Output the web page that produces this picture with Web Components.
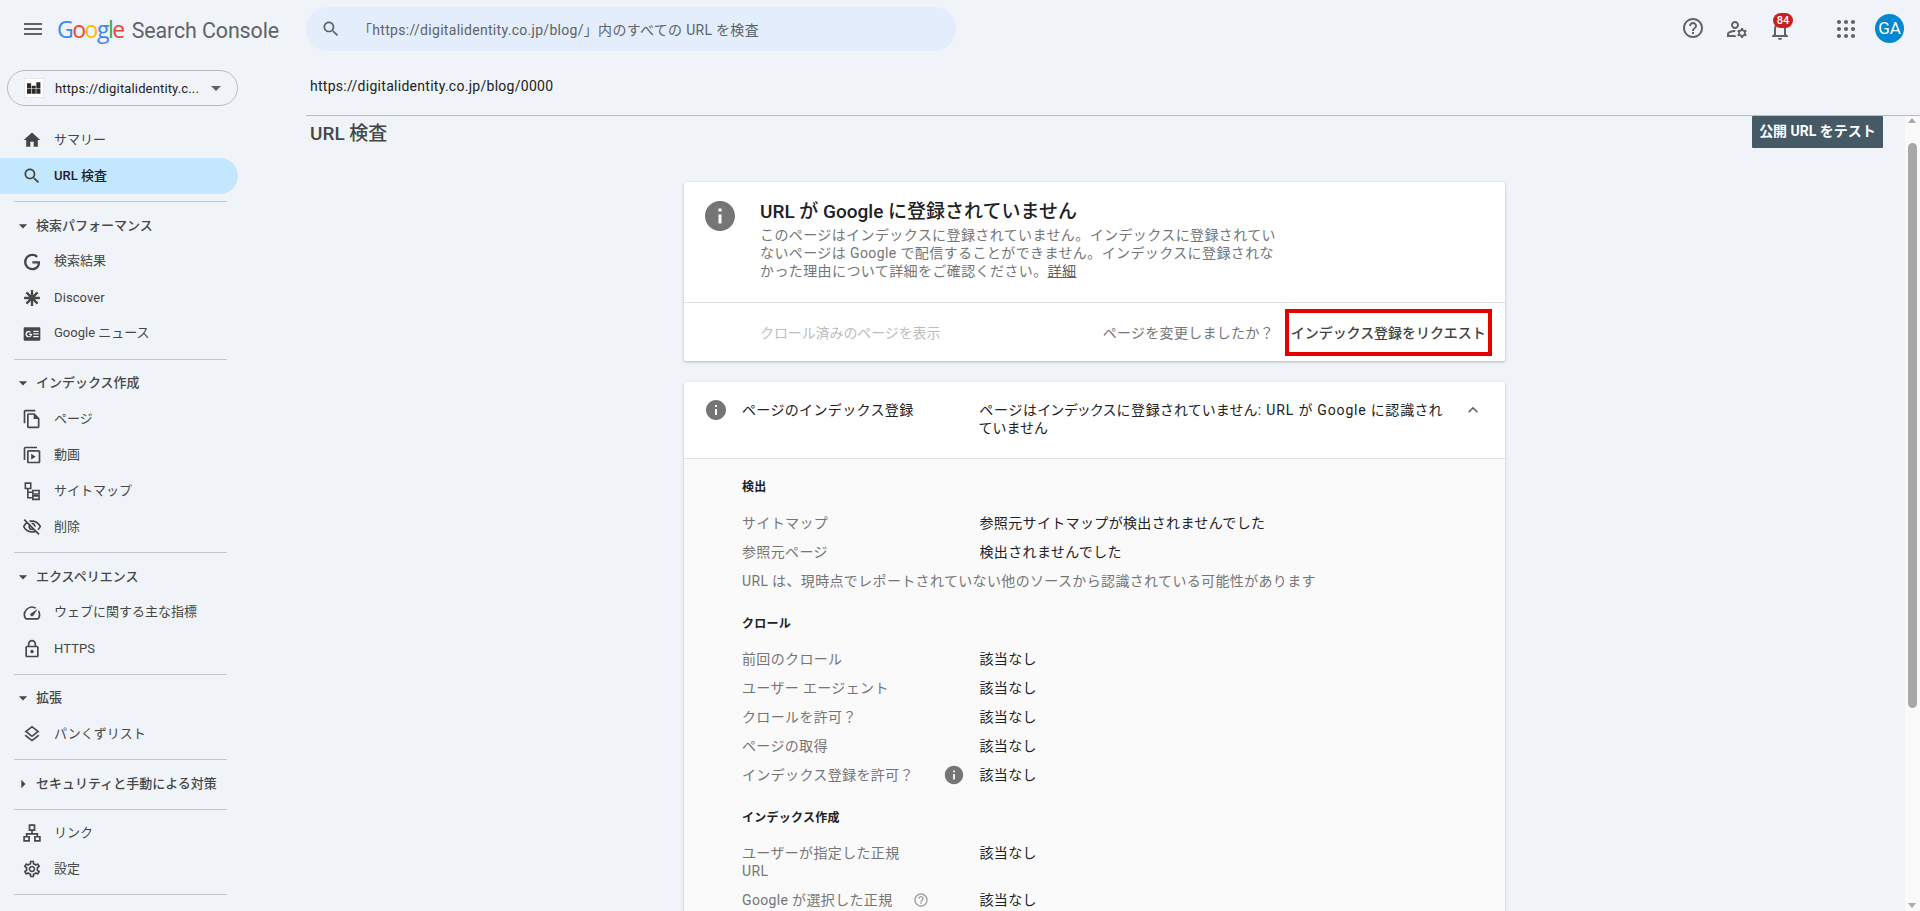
<!DOCTYPE html>
<html lang="ja"><head><meta charset="utf-8"><title>Search Console</title>
<style>
html,body{margin:0;height:100%;overflow:hidden;background:#f0f4f9;font-family:Roboto,"Noto Sans CJK JP",sans-serif;color:#3c4043}
</style></head><body>
<gsc-app>
  <gsc-header slot="header"></gsc-header>
  <gsc-sidebar slot="side">
    <gsc-property>https://digitalidentity.c...</gsc-property>
    <gsc-group first>
      <gsc-nav icon="home">サマリー</gsc-nav>
      <gsc-nav icon="search" active>URL 検査</gsc-nav>
    </gsc-group>
    <gsc-group>
      <gsc-sec>検索パフォーマンス</gsc-sec>
      <gsc-nav icon="g">検索結果</gsc-nav>
      <gsc-nav icon="discover" latin>Discover</gsc-nav>
      <gsc-nav icon="news">Google ニュース</gsc-nav>
    </gsc-group>
    <gsc-group>
      <gsc-sec>インデックス作成</gsc-sec>
      <gsc-nav icon="pages">ページ</gsc-nav>
      <gsc-nav icon="video">動画</gsc-nav>
      <gsc-nav icon="sitemap">サイトマップ</gsc-nav>
      <gsc-nav icon="eyeoff">削除</gsc-nav>
    </gsc-group>
    <gsc-group>
      <gsc-sec>エクスペリエンス</gsc-sec>
      <gsc-nav icon="speed">ウェブに関する主な指標</gsc-nav>
      <gsc-nav icon="lock" latin>HTTPS</gsc-nav>
    </gsc-group>
    <gsc-group>
      <gsc-sec>拡張</gsc-sec>
      <gsc-nav icon="layers">パンくずリスト</gsc-nav>
    </gsc-group>
    <gsc-group>
      <gsc-sec closed>セキュリティと手動による対策</gsc-sec>
    </gsc-group>
    <gsc-group>
      <gsc-nav icon="links">リンク</gsc-nav>
      <gsc-nav icon="settings">設定</gsc-nav>
    </gsc-group>
  </gsc-sidebar>
  <gsc-main slot="main">
    <gsc-status></gsc-status>
    <gsc-details>
      <gsc-h first>検出</gsc-h>
      <gsc-row label="サイトマップ">参照元サイトマップが検出されませんでした</gsc-row>
      <gsc-row label="参照元ページ">検出されませんでした</gsc-row>
      <gsc-note>URL は、現時点でレポートされていない他のソースから認識されている可能性があります</gsc-note>
      <gsc-h>クロール</gsc-h>
      <gsc-row label="前回のクロール">該当なし</gsc-row>
      <gsc-row label="ユーザー エージェント">該当なし</gsc-row>
      <gsc-row label="クロールを許可？">該当なし</gsc-row>
      <gsc-row label="ページの取得">該当なし</gsc-row>
      <gsc-row label="インデックス登録を許可？" hint="info">該当なし</gsc-row>
      <gsc-h>インデックス作成</gsc-h>
      <gsc-row label="ユーザーが指定した正規 URL">該当なし</gsc-row>
      <gsc-row label="Google が選択した正規" hint="help">該当なし</gsc-row>
    </gsc-details>
  </gsc-main>
</gsc-app>
<script>
const P={
menu:'<path d="M3 18h18v-2H3v2zm0-5h18v-2H3v2zm0-7v2h18V6H3z"/>',
search:'<path d="M15.5 14h-.79l-.28-.27C15.41 12.59 16 11.11 16 9.5 16 5.91 13.09 3 9.5 3S3 5.91 3 9.5 5.91 16 9.5 16c1.61 0 3.09-.59 4.23-1.57l.27.28v.79l5 4.99L20.49 19l-4.99-5zm-6 0C7.01 14 5 11.99 5 9.5S7.01 5 9.5 5 14 7.01 14 9.5 11.99 14 9.5 14z"/>',
home:'<path d="M10 20v-6h4v6h5v-8h3L12 3 2 12h3v8z"/>',
g:'<path transform="translate(2.2 2.2) scale(.82)" d="M12.48 10.92v3.28h7.84c-.24 1.84-.853 3.187-1.787 4.133-1.147 1.147-2.933 2.4-6.053 2.4-4.827 0-8.6-3.893-8.6-8.72s3.773-8.72 8.6-8.72c2.6 0 4.507 1.027 5.907 2.347l2.307-2.307C18.747 1.44 16.133 0 12.48 0 5.867 0 .307 5.387.307 12s5.56 12 12.173 12c3.573 0 6.267-1.173 8.373-3.36 2.16-2.16 2.84-5.213 2.84-7.667 0-.76-.053-1.467-.173-2.053H12.48z"/>',
discover:'<path d="M12 2.5v19M2.5 12h19M5.3 5.3l13.4 13.4M18.7 5.3L5.3 18.7" fill="none" stroke="currentColor" stroke-width="2.8"/>',
news:'<path fill-rule="evenodd" d="M3 4h18a1 1 0 0 1 1 1v14a1 1 0 0 1-1 1H3a1 1 0 0 1-1-1V5a1 1 0 0 1 1-1zm10.500 4v1.500H20V8zm0 3.200v1.500H20v-1.500zm0 3.300V16H20v-1.500zM8.200 8a4 4 0 1 0 3.800 5.200c.1-.4.200-1 .1-1.600H8.300v1.500h2.100a2.300 2.300 0 1 1-.7-2.500l1.100-1.100A4 4 0 0 0 8.200 8z"/>',
pages:'<path d="M16 1H4c-1.100 0-2 .9-2 2v14h2V3h12V1zm-1 4H8c-1.100 0-1.990.9-1.990 2L6 21c0 1.100.89 2 1.990 2H19c1.100 0 2-.9 2-2V11l-6-6zM8 21V7h6v5h5v9H8z"/>',
video:'<path fill-rule="evenodd" d="M4 2h14v2H4v14H2V4c0-1.100.9-2 2-2zm4 4h12c1.100 0 2 .9 2 2v12c0 1.100-.9 2-2 2H8c-1.100 0-2-.9-2-2V8c0-1.100.9-2 2-2zm0 2v12h12V8H8zm3 2.500v7l5.500-3.500z"/>',
sitemap:'<path fill="none" stroke="currentColor" stroke-width="1.900" d="M4 2.500h6.500v6.500H4zM13 11.300h7.500v4.200H13zM13 17.800h7.500v4.200H13zM7 9v11h6M7 13.400h6"/>',
eyeoff:'<path d="M12 6c3.790 0 7.170 2.130 8.820 5.500-.59 1.220-1.420 2.270-2.410 3.120l1.410 1.410c1.390-1.230 2.490-2.770 3.180-4.530C21.270 7.110 17 4 12 4c-1.270 0-2.490.2-3.640.57l1.650 1.650C10.660 6.090 11.320 6 12 6zm-1.070 1.140L13 9.210c.57.25 1.030.71 1.280 1.280l2.070 2.070c.08-.34.14-.7.14-1.070C16.500 9.010 14.480 7 12 7c-.37 0-.72.05-1.070.14zM2.010 3.870l2.680 2.680C3.060 7.830 1.770 9.530 1 11.500 2.730 15.890 7 19 12 19c1.520 0 2.980-.29 4.320-.82l3.420 3.420 1.410-1.410L3.420 2.450 2.010 3.870zm7.500 7.500l2.610 2.610c-.04.01-.08.02-.12.02-1.380 0-2.500-1.120-2.500-2.500 0-.05.01-.08.01-.13zm-3.400-3.400l1.750 1.750c-.23.55-.36 1.150-.36 1.780 0 2.480 2.020 4.500 4.500 4.500.63 0 1.230-.13 1.770-.36l.98.98c-.88.24-1.800.38-2.750.38-3.790 0-7.170-2.130-8.820-5.500.7-1.430 1.720-2.610 2.930-3.530z"/>',
speed:'<path d="M20.380 8.570l-1.230 1.850a8 8 0 0 1-.22 7.580H5.070A8 8 0 0 1 15.580 6.850l1.850-1.230A10 10 0 0 0 3.350 19a2 2 0 0 0 1.720 1h13.850a2 2 0 0 0 1.740-1 10 10 0 0 0-.27-10.440zm-9.790 6.840a2 2 0 0 0 2.830 0l5.660-8.490-8.490 5.660a2 2 0 0 0 0 2.830z"/>',
lock:'<path d="M18 8h-1V6c0-2.760-2.240-5-5-5S7 3.240 7 6v2H6c-1.100 0-2 .9-2 2v10c0 1.100.9 2 2 2h12c1.100 0 2-.9 2-2V10c0-1.100-.9-2-2-2zM9 6c0-1.660 1.340-3 3-3s3 1.340 3 3v2H9V6zm9 14H6V10h12v10zm-6-3c1.100 0 2-.9 2-2s-.9-2-2-2-2 .9-2 2 .9 2 2 2z"/>',
layers:'<path d="M11.990 18.540l-7.370-5.730L3 14.070l9 7 9-7-1.630-1.270-7.380 5.740zM12 16l7.360-5.730L21 9l-9-7-9 7 1.630 1.270L12 16zm0-11.470L17.740 9 12 13.470 6.260 9 12 4.530z"/>',
links:'<path fill="none" stroke="currentColor" stroke-width="2" d="M9 2.500h6v6H9zM2.500 16.500h6v5h-6zM15.500 16.500h6v5h-6zM12 8.500V13M5.500 16.500V13h13v3.500"/>',
settings:'<path d="M19.430 12.980c.04-.32.07-.64.07-.98 0-.34-.03-.66-.07-.98l2.110-1.650c.19-.15.24-.42.12-.64l-2-3.460c-.09-.16-.26-.25-.44-.25-.06 0-.12.01-.17.03l-2.490 1c-.52-.4-1.080-.73-1.690-.98l-.38-2.650C14.460 2.180 14.250 2 14 2h-4c-.25 0-.46.18-.49.42l-.38 2.650c-.61.25-1.170.59-1.690.98l-2.490-1c-.06-.02-.12-.03-.18-.03-.17 0-.34.09-.43.25l-2 3.460c-.13.22-.07.49.12.64l2.110 1.650c-.04.32-.07.65-.07.98 0 .33.03.66.07.98l-2.110 1.650c-.19.15-.24.42-.12.64l2 3.460c.09.16.26.25.44.25.06 0 .12-.01.17-.03l2.490-1c.52.4 1.080.73 1.690.98l.38 2.650c.03.24.24.42.49.42h4c.25 0 .46-.18.49-.42l.38-2.650c.61-.25 1.170-.59 1.690-.98l2.490 1c.06.02.12.03.18.03.17 0 .34-.09.43-.25l2-3.460c.12-.22.07-.49-.12-.64l-2.110-1.650zm-1.980-1.710c.04.31.05.52.05.73 0 .21-.02.43-.05.73l-.14 1.130.89.7 1.080.84-.7 1.210-1.270-.51-1.040-.42-.9.68c-.43.32-.84.56-1.250.73l-1.060.43-.16 1.130-.2 1.350h-1.400l-.19-1.350-.16-1.130-1.060-.43c-.43-.18-.83-.41-1.230-.71l-.91-.7-1.060.43-1.270.51-.7-1.210 1.080-.84.89-.7-.14-1.130c-.03-.31-.05-.54-.05-.74s.02-.43.05-.73l.14-1.130-.89-.7-1.080-.84.7-1.210 1.270.51 1.040.42.9-.68c.43-.32.84-.56 1.250-.73l1.060-.43.16-1.130.2-1.350h1.390l.19 1.350.16 1.130 1.060.43c.43.18.83.41 1.230.71l.91.7 1.060-.43 1.270-.51.7 1.210-1.070.85-.89.7.14 1.130zM12 8c-2.210 0-4 1.790-4 4s1.790 4 4 4 4-1.790 4-4-1.790-4-4-4zm0 6c-1.100 0-2-.9-2-2s.9-2 2-2 2 .9 2 2-.9 2-2 2z"/>',
help:'<path d="M11 18h2v-2h-2v2zm1-16C6.480 2 2 6.480 2 12s4.480 10 10 10 10-4.480 10-10S17.520 2 12 2zm0 18c-4.410 0-8-3.590-8-8s3.590-8 8-8 8 3.590 8 8-3.590 8-8 8zm0-14c-2.210 0-4 1.790-4 4h2c0-1.100.9-2 2-2s2 .9 2 2c0 2-3 1.750-3 5h2c0-2.250 3-2.500 3-5 0-2.210-1.790-4-4-4z"/>',
admin:'<path d="M4 18v-.65c0-.34.16-.66.41-.81C6.100 15.530 8.030 15 10 15c.03 0 .05 0 .08.01.1-.7.3-1.370.59-1.980-.22-.02-.44-.03-.67-.03-2.420 0-4.680.67-6.610 1.820-.88.52-1.390 1.500-1.390 2.530V20h9.260c-.42-.6-.75-1.280-.97-2H4zM10 12c2.210 0 4-1.790 4-4s-1.790-4-4-4-4 1.790-4 4 1.790 4 4 4zm0-6c1.100 0 2 .9 2 2s-.9 2-2 2-2-.9-2-2 .9-2 2-2zm10.750 10c0-.22-.03-.42-.06-.63l1.140-1.010-1-1.730-1.450.49c-.32-.27-.68-.48-1.080-.63L18 11h-2l-.3 1.490c-.4.15-.76.36-1.080.63l-1.450-.49-1 1.730 1.140 1.010c-.03.21-.06.41-.06.63s.03.42.06.63l-1.140 1.010 1 1.730 1.450-.49c.32.27.68.48 1.080.63L16 21h2l.3-1.490c.4-.15.76-.36 1.080-.63l1.450.49 1-1.730-1.140-1.010c.03-.21.06-.41.06-.63zM17 18c-1.100 0-2-.9-2-2s.9-2 2-2 2 .9 2 2-.9 2-2 2z"/>',
bell:'<path d="M12 22c1.100 0 2-.9 2-2h-4c0 1.100.9 2 2 2zm6-6v-5c0-3.070-1.630-5.640-4.500-6.320V4c0-.83-.67-1.500-1.500-1.500s-1.500.67-1.500 1.500v.68C7.640 5.360 6 7.920 6 11v5l-2 2v1h16v-1l-2-2zm-2 1H8v-6c0-2.480 1.510-4.500 4-4.500s4 2.020 4 4.500v6z"/>',
apps:[5,12,19].flatMap(y=>[5,12,19].map(x=>`<circle cx="${x}" cy="${y}" r="2.100"/>`)).join(''),
info:'<path d="M12 2C6.480 2 2 6.480 2 12s4.480 10 10 10 10-4.480 10-10S17.520 2 12 2zm1 15h-2v-6h2v6zm0-8h-2V7h2v2z"/>',
up:'<path d="M12 8l-6 6 1.410 1.410L12 10.830l4.590 4.580L18 14z"/>',
down:'<path d="M7 10l5 5 5-5z"/>',
right:'<path d="M10 7l5 5-5 5z"/>'
};
function def(name,css,html){
  customElements.define(name,class extends HTMLElement{
    constructor(){super();const r=this.attachShadow({mode:'open'});
      r.innerHTML='<style>'+css+'</style>'+(typeof html==='function'?html(this):html);}
  });
}
const ic=(n,s,st='')=>`<svg viewBox="0 0 24 24" width="${s}" height="${s}" fill="currentColor" style="display:block;flex:none;${st}">${P[n]}</svg>`;
const q=s=>s.replace('？','<span style="font-feature-settings:normal">？</span>');

def('gsc-app',`:host{display:grid;grid-template-columns:306px 1fr;grid-template-rows:58px 1fr;height:911px;overflow:hidden}
 ::slotted([slot=header]){grid-column:1/3}`,
 '<slot name="header"></slot><slot name="side"></slot><slot name="main"></slot>');

def('gsc-header',`:host{display:flex;align-items:center;height:58px;box-sizing:border-box;color:#5f6368}
 .burger{margin-left:21px;width:24px;color:#5f6368}
 .logo{display:flex;align-items:baseline;margin-left:13px;width:248px;white-space:nowrap;margin-top:-1px}
 .g{letter-spacing:-1.500px;font:400 23px "Open Sans",sans-serif;margin-left:-1px}
 .b{color:#4285f4}.r{color:#ea4335}.y{color:#fbbc05}.n{color:#34a853}
 .sc{margin-left:8px;color:#5f6368;font:400 21.400px Roboto,sans-serif;letter-spacing:-.1px}
 .search{display:flex;align-items:center;width:650px;height:44px;border-radius:22px;background:#e3edfb;box-sizing:border-box;padding-left:15px}
 .q{margin-left:17px;font:14px Roboto,"Noto Sans CJK JP",sans-serif;color:#5f6368;white-space:nowrap;letter-spacing:.3px}
 .tools{position:relative;flex:1;height:58px}
 .tools>*{position:absolute}
 .badge{left:817px;top:13px;width:20px;height:15px;border-radius:8px;background:#c5221f;color:#fff;font:500 11px/15px Roboto,sans-serif;text-align:center}
 .av{left:919px;top:14px;width:29px;height:29px;border-radius:50%;background:#0288d1;color:#fff;font:400 17px/29px Roboto,sans-serif;text-align:center}`,
 `<div class="burger">${ic('menu',24)}</div>
 <div class="logo"><span class="g"><span class="b">G</span><span class="r">o</span><span class="y">o</span><span class="b">g</span><span class="n">l</span><span class="r">e</span></span><span class="sc">Search Console</span></div>
 <div class="search">${ic('search',20)}<span class="q">「https://digitalidentity.co.jp/blog/」内のすべての URL を検査</span></div>
 <div class="tools">
  <div style="left:725px;top:16px">${ic('help',24)}</div>
  <div style="left:769px;top:17px">${ic('admin',24)}</div>
  <div style="left:812px;top:18px">${ic('bell',24)}</div>
  <div class="badge">84</div>
  <div style="left:878px;top:17px">${ic('apps',24)}</div>
  <div class="av">GA</div>
 </div>`);

def('gsc-sidebar',`:host{display:block;padding-top:12px;box-sizing:border-box;width:238px;height:853px;overflow:hidden}`,'<slot></slot>');

def('gsc-property',`:host{display:flex;align-items:center;box-sizing:border-box;width:231px;height:36px;margin-left:7px;margin-bottom:16px;border:1px solid #b6bbc2;border-radius:18px;padding-left:16px;font:13px Roboto,sans-serif;color:#202124;white-space:nowrap}
 .tile{width:20px;height:20px;background:#fff;display:flex;align-items:center;justify-content:center;border:1px solid #e6e8eb;box-sizing:border-box;flex:none}
 .t{margin-left:11px;flex:1;color:#202124;letter-spacing:.15px}
 .c{color:#5f6368;margin-right:9px}`,
 `<div class="tile"><svg width="14" height="14" viewBox="0 0 12 12" fill="#2b2b2b"><path d="M0 2h3.500v4H0zM4 4h3.500v2H4zM8 1h3.500v5H8zM0 6.500h3.500V11H0zM4 6.500h3.500V11H4zM8 6.500h3.500V11H8z"/></svg></div><span class="t"><slot></slot></span><span class="c">${ic('down',24)}</span>`);

def('gsc-group',`:host{display:block;position:relative;padding:5.500px 0 8px}
 :host::after{content:"";position:absolute;left:14px;right:11px;bottom:0;border-bottom:1px solid #c4c7c5}
 :host([first]){padding-top:0}`,'<slot></slot>');

def('gsc-nav',`:host{display:flex;align-items:center;height:36px;font:13px Roboto,"Noto Sans CJK JP",sans-serif;color:#444746;white-space:nowrap;box-sizing:border-box;padding-left:21px;border-radius:0 18px 18px 0}
 :host([active]){background:#c2e7ff;color:#202124;font-weight:500}
 .i{width:22px;display:flex;justify-content:center;margin-right:11px;color:#444746}
 .x{padding-bottom:4px}
 :host([latin]) .x{padding-bottom:0;letter-spacing:.1px}`,
 t=>`<span class="i">${ic(t.getAttribute('icon'),20)}</span><span class="x"><slot></slot></span>`);

def('gsc-sec',`:host{display:flex;align-items:center;height:36px;font:500 13px Roboto,"Noto Sans CJK JP",sans-serif;color:#444746;white-space:nowrap;padding-left:13px}
 .i{width:20px;margin-right:3px;display:flex;justify-content:center}
 .x{padding-bottom:3px}`,
 t=>`<span class="i">${ic(t.hasAttribute('closed')?'right':'down',20)}</span><span class="x"><slot></slot></span>`);

def('gsc-main',`:host{display:flex;flex-direction:column;height:853px;min-width:0;font-family:Roboto,"Noto Sans CJK JP",sans-serif}
 .url{height:58px;box-sizing:border-box;border-bottom:1px solid #b8bcc0;padding:0 0 0 4px;font:14px/56px Roboto,sans-serif;letter-spacing:.28px;color:#202124}
 .body{flex:1;display:flex;min-height:0}
 .scroll{flex:1;min-width:0;overflow:hidden}
 .top{display:flex;justify-content:space-between;align-items:flex-start;height:32px;padding:0 22px 0 4px}
 h1{margin:0;font:500 19px/35px Roboto,"Noto Sans CJK JP",sans-serif;color:#444746}
 .btn{width:131px;height:32px;background:#455a64;color:#fff;border-radius:1px;font:700 14px/31px Roboto,"Noto Sans CJK JP",sans-serif;text-align:center;white-space:nowrap}
 .col{width:821px;margin:34px 0 0 378px;display:flex;flex-direction:column;gap:21px}
 .bar{width:15px;background:#fafafa;position:relative;flex:none}
 .thumb{position:absolute;left:3px;right:3px;top:27px;height:565px;background:#a8a8a8;border-radius:5px}
 .a{position:absolute;left:3px;width:0;height:0;border:4.500px solid transparent}
 .au{top:2px;border-bottom:5px solid #a8a8a8;border-top:0}
 .ad{bottom:3px;border-top:5px solid #a8a8a8;border-bottom:0}`,
 `<div class="url">https://digitalidentity.co.jp/blog/0000</div>
 <div class="body"><div class="scroll">
  <div class="top"><h1>URL 検査</h1><div class="btn">公開 URL をテスト</div></div>
  <div class="col"><slot></slot></div>
 </div><div class="bar"><i class="a au"></i><i class="thumb"></i><i class="a ad"></i></div></div>`);

def('gsc-status',`:host{display:block;background:#fff;height:179px;box-shadow:0 1px 3px rgba(60,64,67,.35);border-radius:2px;box-sizing:border-box}
 .head{display:flex;height:121px;box-sizing:border-box;border-bottom:1px solid #e0e0e0;padding:17px 0 0 18px;font-feature-settings:"palt"}
 .ico{color:#757575;margin-right:22px;margin-top:-1px}
 h2{margin:0;font:500 19px/26px Roboto,"Noto Sans CJK JP",sans-serif;color:#202124}
 .d{margin:.5px 0 0;font:14px/18.200px Roboto,"Noto Sans CJK JP",sans-serif;color:#757575;letter-spacing:.4px;white-space:nowrap}
 .d div{display:block}
 a{color:#616161;text-decoration:underline}
 .foot{display:flex;align-items:center;height:58px;padding:0 14px 0 76px;font-size:14px;color:#757575;white-space:nowrap;letter-spacing:.3px}
 .dis{flex:1;color:#bdbdbd;letter-spacing:-.1px}
 .req{margin-left:11px;box-sizing:border-box;width:206.500px;height:47px;border:4px solid #e60000;display:flex;align-items:center;justify-content:center;color:#424242;font-weight:500;margin-right:-.5px;letter-spacing:-.05px}`,
 `<div class="head"><span class="ico">${ic('info',36)}</span><div><h2>URL が Google に登録されていません</h2>
 <div class="d"><div>このページはインデックスに登録されていません。インデックスに登録されてい</div><div>ないページは Google で配信することができません。インデックスに登録されな</div><div>かった理由について詳細をご確認ください。<a>詳細</a></div></div></div></div>
 <div class="foot"><span class="dis">クロール済みのページを表示</span><span>ページを変更しましたか？</span><span class="req">インデックス登録をリクエスト</span></div>`);

def('gsc-details',`:host{display:block;background:#fff;box-shadow:0 1px 3px rgba(60,64,67,.3);border-radius:2px 2px 0 0}
 .head{display:flex;height:77px;box-sizing:border-box;border-bottom:1px solid #e0e0e0;padding-top:19px;font:14px/18px Roboto,"Noto Sans CJK JP",sans-serif;color:#202124}
 .i{color:#757575;margin:0 14px 0 20px}
 .l{width:237px;flex:none;letter-spacing:.35px}
 .v{width:466px;flex:none;font-feature-settings:"palt";letter-spacing:.85px}
 .up{color:#5f6368;margin-left:18px}
 .body{background:#fafafa;padding:0 0 200px 58px;font-feature-settings:"palt"}`,
 `<div class="head"><span class="i">${ic('info',24,'margin-top:-3px')}</span><span class="l">ページのインデックス登録</span><span class="v">ページはインデックスに登録されていません: URL が Google に認識されていません</span><span class="up">${ic('up',20,'margin-top:-1px')}</span></div>
 <div class="body"><slot></slot></div>`);

def('gsc-h',`:host{display:block;font:700 12px/18px Roboto,"Noto Sans CJK JP",sans-serif;letter-spacing:.25px;color:#202124;padding:19.500px 0 11.500px}
 :host([first]){padding:19px 0 12.500px}`,'<slot></slot>');
def('gsc-note',`:host{display:block;font:14px/18px Roboto,"Noto Sans CJK JP",sans-serif;letter-spacing:.35px;color:#757575;padding:5.500px 0}`,'<slot></slot>');
def('gsc-row',`:host{display:flex;font:14px/18px Roboto,"Noto Sans CJK JP",sans-serif;letter-spacing:.35px;color:#202124;padding:5.500px 0}
 .l{width:237.500px;flex:none;color:#757575;display:flex;align-items:flex-start}
 .t{flex:none;max-width:176px}
 .h{flex:none;margin-left:auto;display:flex}
 .info{margin:-2px 15px -2px auto}
 .help{margin:1px 51px 0 auto}`,
 t=>{const h=t.getAttribute('hint');const s=h?(h==='info'?`<span class="h info">${ic('info',22,'color:#757575')}</span>`:`<span class="h help">${ic('help',16,'color:#9e9e9e')}</span>`):'';
  return `<span class="l"><span class="t">${q(t.getAttribute('label'))}</span>${s}</span><span><slot></slot></span>`});
</script>
</body></html>
